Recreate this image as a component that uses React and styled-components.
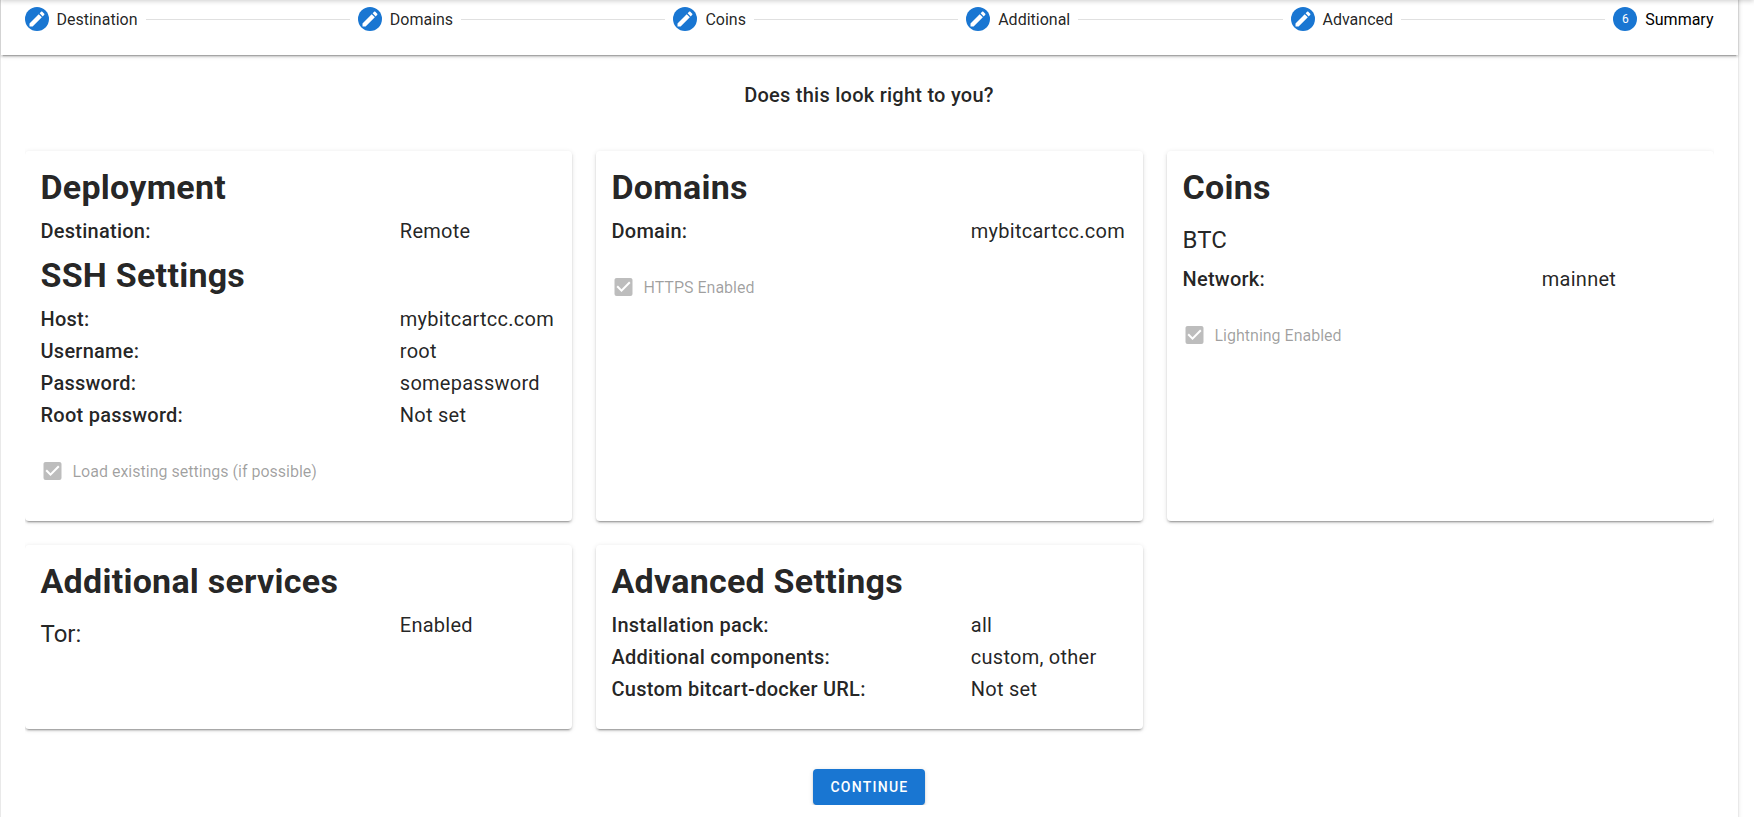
import React from "react";
import styled, { createGlobalStyle } from "styled-components";

const GlobalStyle = createGlobalStyle`
  *, *::before, *::after { box-sizing: border-box; }
  html, body { margin: 0; height: 100%; overflow: hidden; background: #fff; }
  body { font-family: Roboto, sans-serif; font-size: 16px; line-height: 1.5; color: rgba(0, 0, 0, 0.87); }
  h1, h2, h3, p { margin: 0; }
`;

const elevation2 =
  "0 3px 1px -2px rgba(0,0,0,.2), 0 2px 2px 0 rgba(0,0,0,.14), 0 1px 5px 0 rgba(0,0,0,.12)";

const Viewport = styled.main`
  position: relative;
  height: 817px;
  overflow: hidden;
  background: #fff;
`;

const AppBarEdge = styled.div`
  position: absolute;
  top: -8px;
  left: 0;
  right: 0;
  height: 8px;
  box-shadow: 0 1px 5px rgba(0, 0, 0, 0.2);
`;

const Stepper = styled.section`
  width: 1737px;
  height: 880px;
  margin: -17px 0 0 0.5px;
  background: #fff;
  border-radius: 4px;
  box-shadow: ${elevation2};
`;

const StepperHeader = styled.header`
  display: flex;
  justify-content: space-between;
  align-items: center;
  height: 72px;
  box-shadow: ${elevation2};
`;

const Step = styled.div`
  display: flex;
  align-items: center;
  padding: 24px;
  line-height: 1;
  color: ${({ $current }) => ($current ? "#000" : "rgba(0,0,0,.87)")};
`;

const StepName = styled.span`
  padding-top: 2px;
`;

const StepBadge = styled.span`
  display: flex;
  align-items: center;
  justify-content: center;
  width: 24px;
  height: 24px;
  margin-right: 8px;
  border-radius: 50%;
  background: #1976d2;
  color: #fff;
  font-size: 12px;
  svg { width: 20px; height: 20px; fill: currentColor; }
`;

const Connector = styled.div`
  flex: 1;
  height: 1px;
  margin: 0 -16px;
  background: rgba(0, 0, 0, 0.12);
`;

const Content = styled.div`
  padding: 24px;
`;

const Clip = styled.div`
  display: flex;
  flex-direction: column;
  align-items: center;
  overflow: hidden;
`;

const Question = styled.h3`
  margin-bottom: 40px;
  font-size: 20px;
  font-weight: 500;
  line-height: 32px;
  letter-spacing: 0.0125em;
`;

const CardGrid = styled.div`
  display: grid;
  grid-template-columns: repeat(3, 1fr);
  grid-template-rows: 370px 184px;
  gap: 24px;
  width: 100%;
`;

const Card = styled.article`
  display: flex;
  flex-direction: column;
  gap: 8px;
  padding: 16px;
  border-radius: 4px;
  background: #fff;
  box-shadow: ${elevation2};
`;

const CardTitle = styled.h1`
  font-size: 34px;
  font-weight: 700;
  line-height: 40px;
  letter-spacing: 0.0073529412em;
`;

const CoinName = styled.p`
  margin: 9px 0 -1px;
  font-size: 24px;
  line-height: 32px;
  letter-spacing: normal;
`;

const Row = styled.div`
  display: grid;
  grid-template-columns: 359.33px 1fr;
  font-size: 20px;
  line-height: 32px;
  letter-spacing: 0.0125em;
`;

const Label = styled.span`
  font-weight: 500;
`;

const Value = styled.span`
  white-space: nowrap;
`;

const CheckRow = styled.div`
  display: flex;
  align-items: center;
  gap: 8px;
  margin-top: 20px;
  height: 24px;
  color: rgba(0, 0, 0, 0.38);
  svg { width: 24px; height: 24px; fill: rgba(0, 0, 0, 0.26); }
`;

const CheckLabel = styled.span`
  padding-top: 2px;
`;

const ContinueButton = styled.button`
  height: 36px;
  width: 112px;
  margin: 40px 0 0;
  padding: 0 0 0 1px;
  border: 0;
  border-radius: 4px;
  background: #1976d2;
  color: #fff;
  font: 500 14px Roboto, sans-serif;
  letter-spacing: 0.0892857143em;
  text-transform: uppercase;
  box-shadow: ${elevation2};
`;

const Pencil = () => (
  <svg viewBox="0 0 24 24">
    <path d="M20.71,7.04C21.1,6.65 21.1,6 20.71,5.63L18.37,3.29C18,2.9 17.35,2.9 16.96,3.29L15.12,5.12L18.87,8.87M3,17.25V21H6.75L17.81,9.93L14.06,6.18L3,17.25Z" />
  </svg>
);

const CheckedBox = () => (
  <svg viewBox="0.5 0 24 24">
    <path d="M10,17L5,12L6.41,10.58L10,14.17L17.59,6.58L19,8M19,3H5C3.89,3 3,3.89 3,5V19A2,2 0 0,0 5,21H19A2,2 0 0,0 21,19V5C21,3.89 20.1,3 19,3Z" />
  </svg>
);

const Field = ({ label, children }) => (
  <Row>
    <Label>{label}</Label>
    <Value>{children}</Value>
  </Row>
);

const Fields = styled.div`
  display: flex;
  flex-direction: column;
`;

const Check = ({ children }) => (
  <CheckRow>
    <CheckedBox />
    <CheckLabel>{children}</CheckLabel>
  </CheckRow>
);

const steps = ["Destination", "Domains", "Coins", "Additional", "Advanced", "Summary"];

export default function App() {
  return (
    <Viewport>
      <GlobalStyle />
      <Stepper>
        <StepperHeader>
          {steps.map((name, i) => {
            const current = i === steps.length - 1;
            return (
              <React.Fragment key={name}>
                <Step $current={current}>
                  <StepBadge>{current ? i + 1 : <Pencil />}</StepBadge>
                  <StepName>{name}</StepName>
                </Step>
                {!current && <Connector />}
              </React.Fragment>
            );
          })}
        </StepperHeader>
        <Content>
          <Clip>
            <Question>Does this look right to you?</Question>
            <CardGrid>
              <Card>
                <CardTitle>Deployment</CardTitle>
                <Field label="Destination:">Remote</Field>
                <CardTitle>SSH Settings</CardTitle>
                <Fields>
                  <Field label="Host:">mybitcartcc.com</Field>
                  <Field label="Username:">root</Field>
                  <Field label="Password:">somepassword</Field>
                  <Field label="Root password:">Not set</Field>
                </Fields>
                <Check>Load existing settings (if possible)</Check>
              </Card>
              <Card>
                <CardTitle>Domains</CardTitle>
                <Field label="Domain:">mybitcartcc.com</Field>
                <Check>HTTPS Enabled</Check>
              </Card>
              <Card>
                <CardTitle>Coins</CardTitle>
                <CoinName>BTC</CoinName>
                <Field label="Network:">mainnet</Field>
                <Check>Lightning Enabled</Check>
              </Card>
              <Card>
                <CardTitle>Additional services</CardTitle>
                <Row>
                  <CoinName>Tor:</CoinName>
                  <Value>Enabled</Value>
                </Row>
              </Card>
              <Card>
                <CardTitle>Advanced Settings</CardTitle>
                <Fields>
                  <Field label="Installation pack:">all</Field>
                  <Field label="Additional components:">custom, other</Field>
                  <Field label="Custom bitcart-docker URL:">Not set</Field>
                </Fields>
              </Card>
            </CardGrid>
            <ContinueButton>Continue</ContinueButton>
          </Clip>
        </Content>
      </Stepper>
      <AppBarEdge />
    </Viewport>
  );
}
